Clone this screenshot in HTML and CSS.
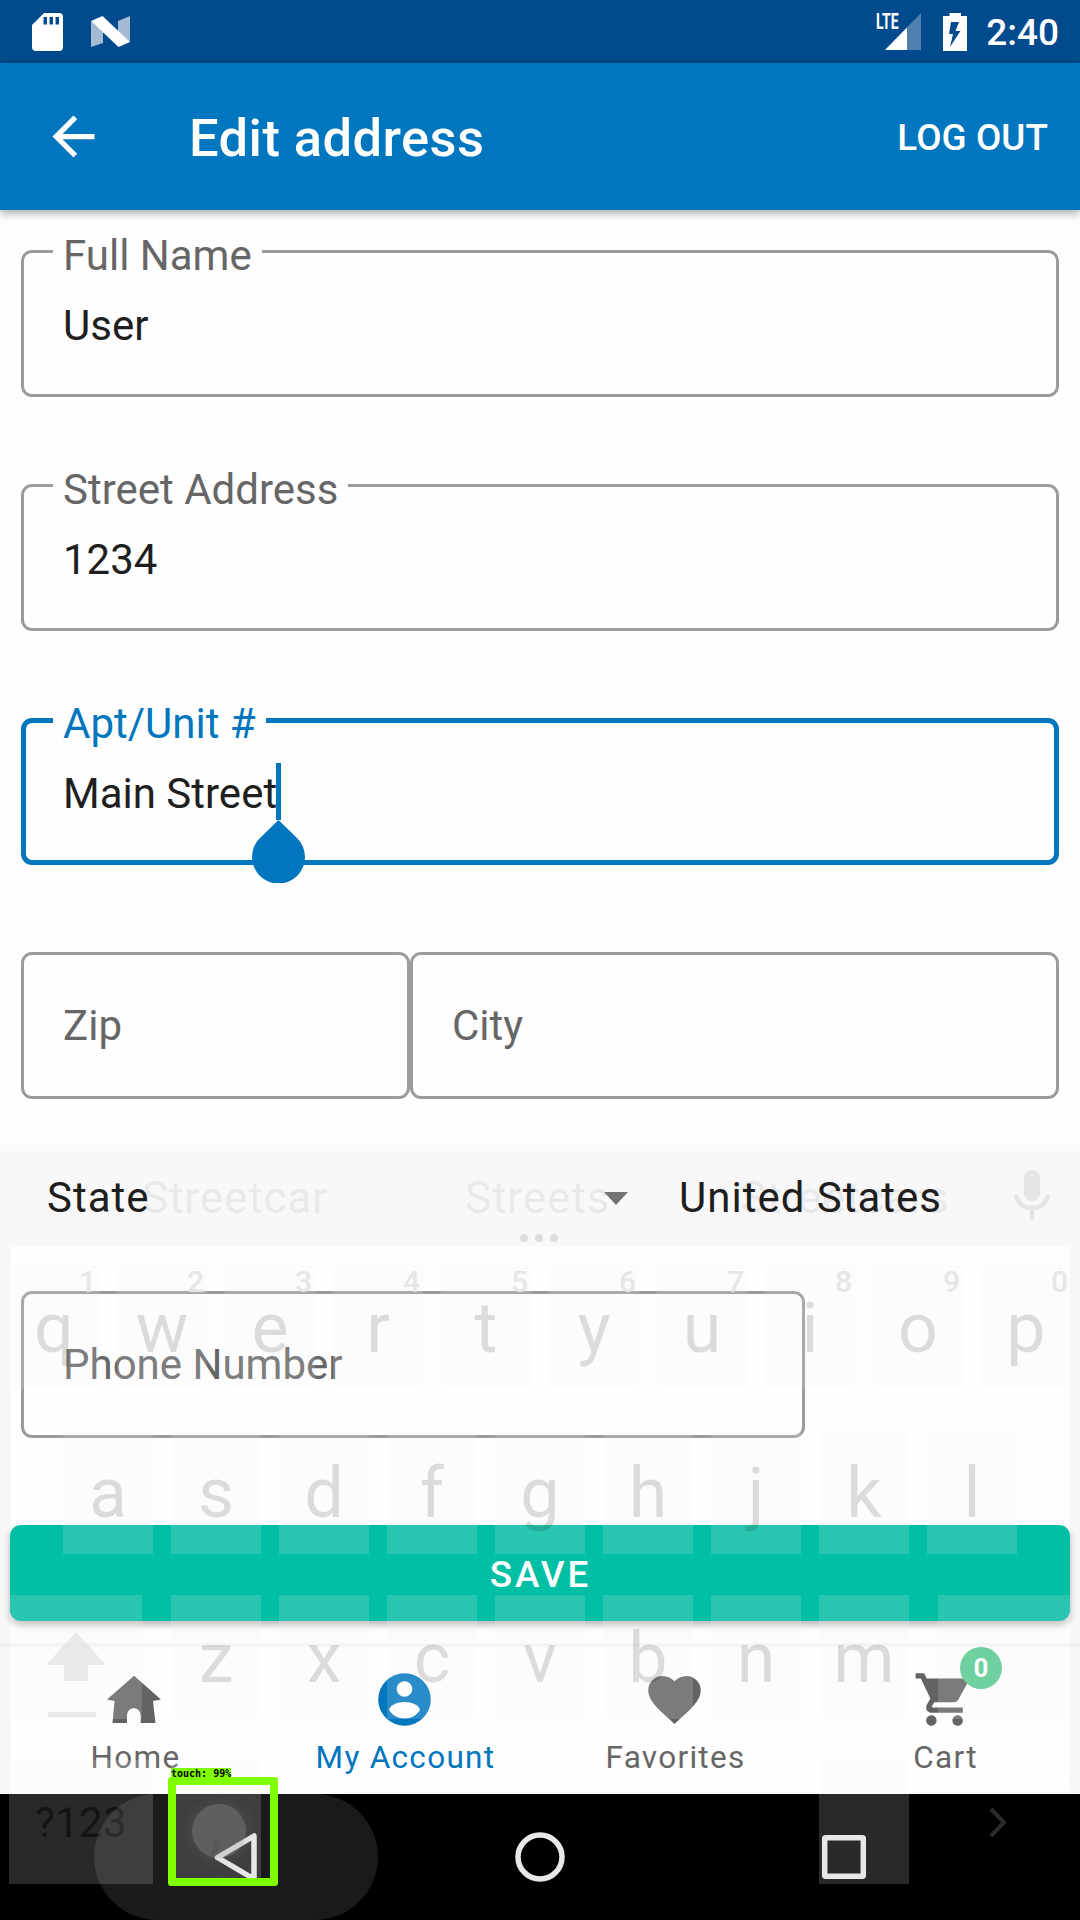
FILE: index.html
```html
<!DOCTYPE html>
<html lang="en">
<head>
<meta charset="utf-8">
<title>Edit address</title>
<link rel="stylesheet" href="styles.css">
</head>
<body>
<div class="screen">
  <header class="status">
    <svg class="sd" viewBox="0 0 31 38"><path fill="#fff" fill-rule="evenodd" d="M12 0H27a4 4 0 0 1 4 4V34a4 4 0 0 1-4 4H4a4 4 0 0 1-4-4V12ZM11.500 4V11.500H15V4ZM17.500 4V11.500H21V4ZM23.500 4V11.500H27V4Z"/></svg>
    <svg class="nougat" viewBox="0 0 39 31"><path fill="#a5bbd3" d="M0 5L12 16V27L0 31ZM27 5L39 0V26L27 16Z"/><path fill="#fff" d="M0 5L11.500 0L39 26L27.500 31Z"/></svg>
    <span class="grow"></span>
    <span class="signal"><svg viewBox="0 0 36 37"><path fill="#5080b0" d="M36 0V37H0Z"/><path fill="#fff" d="M22 14.400V37H0Z"/></svg><b class="lte">LTE</b></span>
    <svg class="battery" viewBox="0 0 24 38"><path fill="#fff" fill-rule="evenodd" d="M6.500 0H18V3H24V38H0V3H6.500ZM8 9L6 21H10L7 34L17.500 18H12.500L16 9Z"/></svg>
    <span class="time">2:40</span>
  </header>
  <div class="appbar">
    <svg class="back" viewBox="0 0 24 24"><path fill="#fff" d="M20 11H7.830l5.590-5.590L12 4l-8 8 8 8 1.410-1.410L7.830 13H20v-2z"/></svg>
    <h1>Edit address</h1>
    <span class="logout">LOG OUT</span>
  </div>
  <main class="form">
    <div class="field"><span class="label">Full Name</span><span class="value">User</span></div>
    <div class="field"><span class="label">Street Address</span><span class="value">1234</span></div>
    <div class="field focused"><span class="label">Apt/Unit #</span><span class="value">Main Street<i class="caret"><svg viewBox="0 0 53 63"><path fill="#0076be" d="M26.500 0L45 18A26.500 26.500 0 1 1 8 18Z"/></svg></i></span></div>
    <div class="pair">
      <div class="field zip"><span class="hint">Zip</span></div>
      <div class="field city"><span class="hint">City</span></div>
    </div>
    <div class="selects">
      <span class="state">State</span>
      <svg class="drop" viewBox="0 0 24 13"><path fill="#777" d="M0 0H24L12 13Z"/></svg>
      <span class="country">United States</span>
    </div>
    <div class="field phone"><span class="hint">Phone Number</span></div>
    <div class="save">SAVE</div>
  </main>
  <nav class="tabs">
    <div class="tab">
      <svg viewBox="0 0 63 63"><path fill="#636363" d="M31.100 7.700L58 31.500L50 33L52.500 55H37.700V48C37.700 37.500 24 37.500 24 48V55H9.500L11.500 33L4 31.500Z"/></svg>
      <span>Home</span>
    </div>
    <div class="tab active">
      <svg viewBox="0 0 63 63"><circle cx="31.500" cy="31.500" r="26.300" fill="#0076be"/><circle cx="31.500" cy="21" r="7.800" fill="#fff"/><path fill="#fff" d="M16 42C17 37 24 34 31.500 34S46 37 47 42C44 47 38 50.500 31.500 50.500S19 47 16 42Z"/></svg>
      <span>My Account</span>
    </div>
    <div class="tab">
      <svg viewBox="0 0 24 24"><path fill="#636363" d="M12 21.350l-1.450-1.320C5.400 15.360 2 12.280 2 8.500 2 5.420 4.420 3 7.500 3c1.740 0 3.410.810 4.500 2.090C13.090 3.810 14.760 3 16.500 3 19.580 3 22 5.420 22 8.500c0 3.780-3.400 6.860-8.550 11.540L12 21.350z"/></svg>
      <span>Favorites</span>
    </div>
    <div class="tab">
      <svg viewBox="0 0 24 24"><path fill="#636363" d="M7 18c-1.100 0-1.990.9-1.990 2S5.900 22 7 22s2-.9 2-2-.9-2-2-2zM1 2v2h2l3.600 7.590-1.350 2.450c-.16.280-.25.610-.25.960 0 1.100.9 2 2 2h12v-2H7.420c-.14 0-.25-.11-.25-.25l.030-.12.900-1.630h7.450c.750 0 1.410-.41 1.750-1.030l3.580-6.490c.080-.14.120-.31.120-.48 0-.55-.45-1-1-1H5.210l-.94-2H1zm16 16c-1.100 0-1.990.9-1.990 2s.89 2 1.990 2 2-.9 2-2-.9-2-2-2z"/></svg>
      <span>Cart</span>
      <b class="badge">0</b>
    </div>
  </nav>
  <footer class="sysnav"></footer>

  <div class="keyboard">
    <div class="suggest">
      <span>Streetcar</span><span>Streets</span><span>Streetcars</span>
      <i class="dots"></i>
      <svg class="mic" viewBox="0 0 36 50"><rect x="10" width="16" height="31" rx="8" fill="#e4e5e7"/><path d="M2 25C3 42 33 42 34 25M18 38V50" fill="none" stroke="#e4e5e7" stroke-width="4.500"/></svg>
    </div>
    <div class="keys first">
      <span>q<sup>1</sup></span><span>w<sup>2</sup></span><span>e<sup>3</sup></span><span>r<sup>4</sup></span><span>t<sup>5</sup></span><span>y<sup>6</sup></span><span>u<sup>7</sup></span><span>i<sup>8</sup></span><span>o<sup>9</sup></span><span>p<sup>0</sup></span>
    </div>
    <div class="keys second">
      <span>a</span><span>s</span><span>d</span><span>f</span><span>g</span><span>h</span><span>j</span><span>k</span><span>l</span>
    </div>
    <div class="keys third">
      <span class="wide"><svg class="shift" viewBox="0 0 60 86"><path fill="#d8dcdc" fill-opacity=".55" d="M30 0L60 33H42V49H18V33H0ZM2 80H50V85H2Z"/></svg></span><span>z</span><span>x</span><span>c</span><span>v</span><span>b</span><span>n</span><span>m</span><span class="wide"></span>
    </div>
    <div class="keys fourth">
      <span class="sym">?123</span><span class="comma">,</span><span class="period"></span>
      <svg class="chev" viewBox="0 0 18 31"><path d="M2 2L15 15.500L2 29" fill="none" stroke="#2a2a2a" stroke-width="4"/></svg>
    </div>
  </div>

  <div class="sysicons">
    <i class="ripple"></i>
    <svg viewBox="0 0 1080 126"><g fill="none" stroke="#e8e8e8" stroke-width="5.500" stroke-linejoin="round"><path d="M217.500 63.500L254 42V85Z"/><circle cx="540" cy="63" r="22"/><rect x="824.700" y="43.700" width="38.600" height="38.600" rx="1"/></g></svg>
  </div>
  <div class="detect"><i class="dot"></i><span>touch: 99%</span></div>
</div>
</body>
</html>
```
FILE: styles.css
```css
* { box-sizing: border-box; }
body { margin: 0; font-family: Roboto, sans-serif; color: #1f1f1f; }
svg { display: block; flex: none; }
i { font-style: normal; }
.screen { position: relative; width: 1080px; height: 1920px; overflow: hidden; background: #fefefe; display: flex; flex-direction: column; }

.status { height: 63px; flex: none; background: #004a8d; display: flex; align-items: center; padding: 0 21px 0 32px; color: #fff; }
.sd { width: 31px; height: 38px; }
.nougat { width: 39px; height: 31px; margin-left: 28px; }
.grow { flex: 1; }
.signal { position: relative; width: 45px; padding-left: 9px; margin-right: 22px; }
.signal svg { width: 36px; height: 37px; }
.lte { position: absolute; left: 0; top: -3px; font-size: 22px; line-height: 24px; font-weight: 700; transform: scaleX(.64); transform-origin: 0 0; }
.battery { width: 24px; height: 38px; margin-right: 19px; }
.time { font-size: 37px; font-weight: 500; line-height: 40px; padding-top: 3px; }

.appbar { height: 147px; flex: none; position: relative; background: #0076be; color: #fff; display: flex; align-items: center; padding: 0 32px 0 41.500px; box-shadow: 0 3px 9px rgba(0,0,0,.35); }
.back { width: 63px; height: 63px; }
h1 { margin: 2px auto 0 84.500px; font-size: 52.500px; font-weight: 500; line-height: 62px; letter-spacing: .42px; }
.logout { font-size: 36.750px; font-weight: 500; line-height: 44px; padding-top: 2px; letter-spacing: .1px; }

.form { flex: 1; padding: 40px 21px 0; }
.field { position: relative; height: 147px; margin-bottom: 87px; border: 3px solid #9b9b9b; border-radius: 11px; font-size: 42px; line-height: 50px; }
.label { position: absolute; left: 29px; top: -22px; padding: 0 10px; background: #fefefe; color: #666; white-space: nowrap; }
.value { display: inline-block; position: relative; padding: 48px 0 0 39px; }
.hint { display: block; padding: 46px 0 0 39px; color: #666; }
.focused { border: 5px solid #0076be; }
.focused .label { left: 27px; top: -24px; color: #0076be; }
.focused .value { padding: 46px 0 0 37px; }
.caret { position: absolute; right: -4px; top: 40px; width: 5px; height: 57px; background: #0076be; }
.caret svg { position: absolute; left: -24px; top: 57px; width: 53px; height: 63px; }
.pair { display: flex; }
.zip { width: 389px; }
.city { flex: 1; }
.selects { display: flex; align-items: center; height: 50px; margin: -13px 0 68px; padding-left: 26px; font-size: 42px; line-height: 50px; letter-spacing: 1px; }
.state { width: 557px; }
.drop { width: 24px; height: 13px; margin-right: 51px; }
.phone { width: 784px; }
.save { height: 96px; margin: 0 -11px; border-radius: 11px; background: #00bfa5; box-shadow: 0 4px 7px rgba(0,0,0,.28); color: #fff; font-size: 36.750px; font-weight: 500; letter-spacing: 3px; text-align: center; line-height: 99px; padding-left: 1px; }

.tabs { height: 151px; flex: none; border-top: 4px solid #f6f6f6; background: #fefefe; display: flex; color: #666; position: relative; }
.tab { flex: 1; position: relative; display: flex; flex-direction: column; align-items: center; padding: 21px 1px 0 0; font-size: 31.500px; line-height: 38px; letter-spacing: 1.300px; }
.tab svg { width: 63px; height: 63px; margin-bottom: 8px; }
.tab span { padding-left: 2px; }
.active { color: #0076be; }
.badge { position: absolute; left: 150px; top: 0; width: 42px; height: 42px; border-radius: 50%; background: #55c98f; color: #fff; font-size: 26px; line-height: 43px; font-weight: 700; letter-spacing: 0; text-align: center; }
.sysnav { height: 126px; flex: none; background: #000; }

.keyboard { position: absolute; left: 0; top: 1145px; width: 1080px; color: rgba(0,0,0,.13); background: linear-gradient(90deg, rgba(0,0,0,.028) 10px, transparent 10px 1070px, rgba(0,0,0,.028) 1070px) 0 101px no-repeat; }
.suggest { position: relative; height: 101px; background: rgba(0,0,0,.022); box-shadow: 0 -2px 4px rgba(0,0,0,.02); display: flex; padding-top: 28px; font-size: 44px; line-height: 50px; color: rgba(10,20,45,.085); }
.suggest span { flex: none; padding-left: 142px; width: 465px; letter-spacing: .9px; }
.suggest span + span { padding-left: 0; width: 275px; }
.dots { position: absolute; left: 520px; top: 89px; width: 8px; height: 8px; border-radius: 50%; background: #ddd; box-shadow: 15px 0 #ddd, 30px 0 #ddd; }
.mic { position: absolute; left: 1014px; top: 25px; width: 36px; height: 50px; }
.keys { display: flex; gap: 18px; height: 124px; margin-bottom: 41px; font-size: 70px; line-height: 127px; text-align: center; }
.keys span { position: relative; width: 90px; flex: none; background: rgba(246,246,246,.17); }
.first { margin-top: 19px; padding-left: 9px; }
.second { padding-left: 63px; }
.third { padding-left: 10px; }
.keys sup { position: absolute; right: 3px; top: 0; font-size: 30px; font-weight: 500; line-height: 34px; color: #e6e6e8; }
.third .wide { width: 132px; margin-right: 11px; }
.third .wide:last-child { margin: 0 0 0 11px; }
.shift { position: absolute; left: 36px; top: 37px; width: 60px; height: 86px; }
.fourth { padding-left: 9px; }
.fourth .sym { width: 144px; font-size: 42px; line-height: 126px; color: rgba(0,0,0,.5); letter-spacing: .3px; }
.fourth .comma { color: rgba(0,0,0,.3); }
.fourth .period { margin-left: 540px; }
.chev { width: 18px; height: 31px; margin: 47px 0 0 62px; }

.sysicons { position: absolute; left: 0; bottom: 0; width: 1080px; height: 126px; }
.ripple { position: absolute; left: 94px; top: 0; width: 284px; height: 126px; border-radius: 63px; background: rgba(255,255,255,.1); }
.sysicons svg { position: relative; width: 1080px; height: 126px; }
.detect { position: absolute; left: 168px; top: 1777px; width: 110px; height: 109px; border: 8px solid #7fff00; border-radius: 3px; }
.detect span { position: absolute; left: -5px; top: -17px; height: 11px; background: #7fff00; color: #000; font: 700 10px/11px "DejaVu Sans Mono", monospace; white-space: nowrap; }
.dot { position: absolute; left: 16px; top: 19px; width: 54px; height: 54px; border-radius: 50%; background: rgba(160,160,155,.34); box-shadow: 0 0 16px rgba(160,160,160,.22); }
```
